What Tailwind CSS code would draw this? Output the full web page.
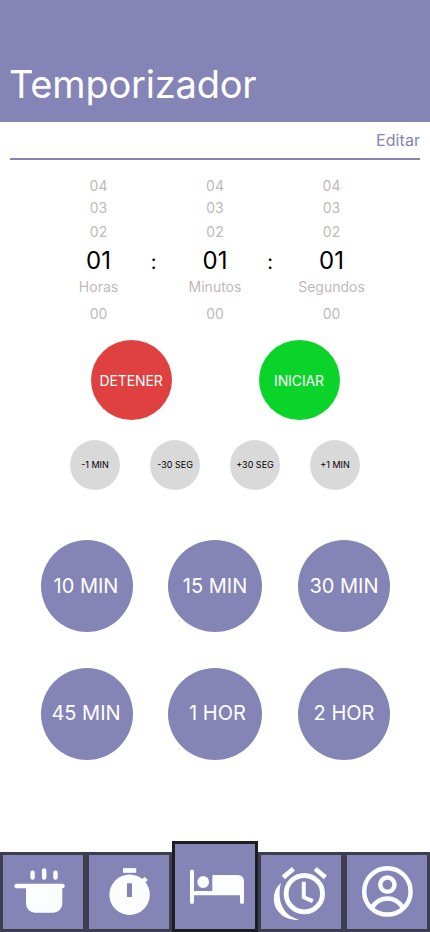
<!DOCTYPE html>
<html lang="es">
<head>
<meta charset="utf-8">
<title>Temporizador</title>
<script src="https://cdn.jsdelivr.net/npm/@tailwindcss/browser@4"></script>
</head>
<body class="bg-white">
<div class="flex h-[932px] w-[430px] flex-col overflow-hidden bg-white font-['Inter',sans-serif] font-normal">
  <header class="flex h-[122px] shrink-0 items-end bg-[#8484b6] px-[9px] pb-[14px]">
    <h1 class="text-[38px] leading-[48px] font-[370] tracking-[-0.2px] text-white">Temporizador</h1>
  </header>
  <div class="mx-[10px] flex h-[38px] shrink-0 items-center justify-end border-b-2 border-[#8484b6] text-[16px] tracking-[0.05px] text-[#8484b6]">Editar</div>

  <section class="flex h-[169px] shrink-0 justify-center pt-[15px] text-center text-[14px] text-[#c0b9b9]">
    <div class="w-[67px]">
      <p class="leading-[22px]">04</p><p class="leading-[22px]">03</p><p class="leading-[26px]">02</p>
      <p class="pt-[2px] text-[24px] leading-[28px] text-black">01</p>
      <p class="leading-[24px]">Horas</p><p class="leading-[30px]">00</p>
    </div>
    <div class="w-[49.5px] pt-[71px] pr-[6px] text-[20px] leading-[32px] text-black">:</div>
    <div class="w-[67px]">
      <p class="leading-[22px]">04</p><p class="leading-[22px]">03</p><p class="leading-[26px]">02</p>
      <p class="pt-[2px] text-[24px] leading-[28px] text-black">01</p>
      <p class="leading-[24px]">Minutos</p><p class="leading-[30px]">00</p>
    </div>
    <div class="w-[49.5px] pt-[71px] pr-[6px] text-[20px] leading-[32px] text-black">:</div>
    <div class="w-[67px]">
      <p class="leading-[22px]">04</p><p class="leading-[22px]">03</p><p class="leading-[26px]">02</p>
      <p class="pt-[2px] text-[24px] leading-[28px] text-black">01</p>
      <p class="leading-[24px]">Segundos</p><p class="leading-[30px]">00</p>
    </div>
  </section>

  <section class="mt-[11px] flex shrink-0 gap-[87px] pl-[91px] text-[14px] tracking-[-0.1px] text-white">
    <button class="flex h-[80px] w-[81px] items-center justify-center rounded-[50%] bg-[#df4040] pt-[1px] pr-[1px]">DETENER</button>
    <button class="flex h-[80px] w-[81px] items-center justify-center rounded-[50%] bg-[#0ad42a] pt-[1px] pr-[1px]">INICIAR</button>
  </section>

  <section class="mt-[20px] flex shrink-0 justify-center gap-[30px] text-[9px] text-black">
    <button class="flex size-[50px] items-center justify-center rounded-full bg-[#d9d9d9]">-1 MIN</button>
    <button class="flex size-[50px] items-center justify-center rounded-full bg-[#d9d9d9]">-30 SEG</button>
    <button class="flex size-[50px] items-center justify-center rounded-full bg-[#d9d9d9]">+30 SEG</button>
    <button class="flex size-[50px] items-center justify-center rounded-full bg-[#d9d9d9]">+1 MIN</button>
  </section>

  <section class="mt-[50px] grid shrink-0 grid-cols-[127px_130px_92px] gap-y-[36px] pl-[41px] text-[20px] whitespace-nowrap text-white">
    <button class="flex h-[92px] w-[92px] items-center justify-center rounded-[50%] bg-[#8484b6] pr-[2px]">10 MIN</button>
    <button class="flex h-[92px] w-[94px] items-center justify-center rounded-[50%] bg-[#8484b6]">15 MIN</button>
    <button class="flex h-[92px] w-[92px] items-center justify-center rounded-[50%] bg-[#8484b6]">30 MIN</button>
    <button class="flex h-[92px] w-[92px] items-center justify-center rounded-[50%] bg-[#8484b6] pr-[2px] pb-[2px]">45 MIN</button>
    <button class="flex h-[92px] w-[94px] items-center justify-center rounded-[50%] bg-[#8484b6] pb-[2px] pl-[5px]">1 HOR</button>
    <button class="flex h-[92px] w-[92px] items-center justify-center rounded-[50%] bg-[#8484b6] pb-[2px]">2 HOR</button>
  </section>

  <nav class="mt-auto flex shrink-0 items-end">
    <a class="h-[80px] w-[86px] border-3 border-[#3e3d4d] bg-[#8484b6]">
      <svg class="block" width="80" height="74" viewBox="0 0 80 74" fill="#fcfdff">
        <rect x="27.4" y="15.6" width="4.4" height="9.2" rx="2.2"/><rect x="38.9" y="13.2" width="4.5" height="11.6" rx="2.2"/><rect x="50.3" y="15.6" width="4.4" height="9.2" rx="2.2"/>
        <rect x="11.4" y="28.8" width="50.3" height="4.5" rx="2.2"/>
        <path d="M23 31H59.3V48.7a9 9 0 0 1-9 9H32a9 9 0 0 1-9-9Z"/>
      </svg>
    </a>
    <a class="h-[80px] w-[86px] border-3 border-[#3e3d4d] bg-[#8484b6]">
      <svg class="block" width="80" height="74" viewBox="0 0 80 74" fill="#fcfdff">
        <rect x="34" y="13.1" width="13.2" height="4.7"/>
        <circle cx="40.6" cy="39.7" r="20.2"/>
        <path d="M51.8 28.6L57.2 23.4" stroke="#fcfdff" stroke-width="4.4"/>
        <rect x="38" y="28.3" width="5" height="13.7" fill="#8484b6"/>
      </svg>
    </a>
    <a class="h-[91px] w-[86px] border-3 border-[#1e1e20] bg-[#8484b6]">
      <svg class="block" width="80" height="85" viewBox="0 0 80 85" fill="#fcfdff">
        <path d="M17 25.6a2 2 0 0 1 2 2V47H37.3V32.2a1.2 1.2 0 0 1 1.2-1.2H63a6 6 0 0 1 6 6V58a2 2 0 0 1-4 0V51.3H19V58a2 2 0 0 1-4 0V27.6a2 2 0 0 1 2-2Z"/>
        <circle cx="28.2" cy="38" r="5.9"/>
      </svg>
    </a>
    <a class="h-[80px] w-[86px] border-3 border-[#3e3d4d] bg-[#8484b6]">
      <svg class="block" width="80" height="74" viewBox="0 0 80 74" fill="none" stroke="#fcfdff">
        <circle cx="43.3" cy="38.7" r="18.2" stroke-width="4.9"/>
        <path d="M42.8 26.8V42.3L51.8 46.2" stroke-width="4"/>
        <path d="M22.3 22.4L32.4 13.8M54.2 13.8L64.4 22.4" stroke-width="4.7"/>
        <path d="M20 28C12 34 10.8 46.5 15.8 54.6C20.5 62 29 65.8 37.6 64.7C29 62 24 57.5 21 51C18 44 18 35 20 28Z" fill="#fcfdff" stroke="none"/>
      </svg>
    </a>
    <a class="h-[80px] w-[86px] border-3 border-[#3e3d4d] bg-[#8484b6]">
      <svg class="block" width="80" height="74" viewBox="0 0 80 74" fill="none" stroke="#fcfdff" stroke-width="4.5">
        <circle cx="40.4" cy="36.4" r="23.2"/>
        <circle cx="40.4" cy="29.7" r="7.1"/>
        <path d="M24.8 52.6C29 46.5 34.5 43.6 40.4 43.6S51.8 46.5 56 52.6"/>
      </svg>
    </a>
  </nav>
</div>
</body>
</html>
